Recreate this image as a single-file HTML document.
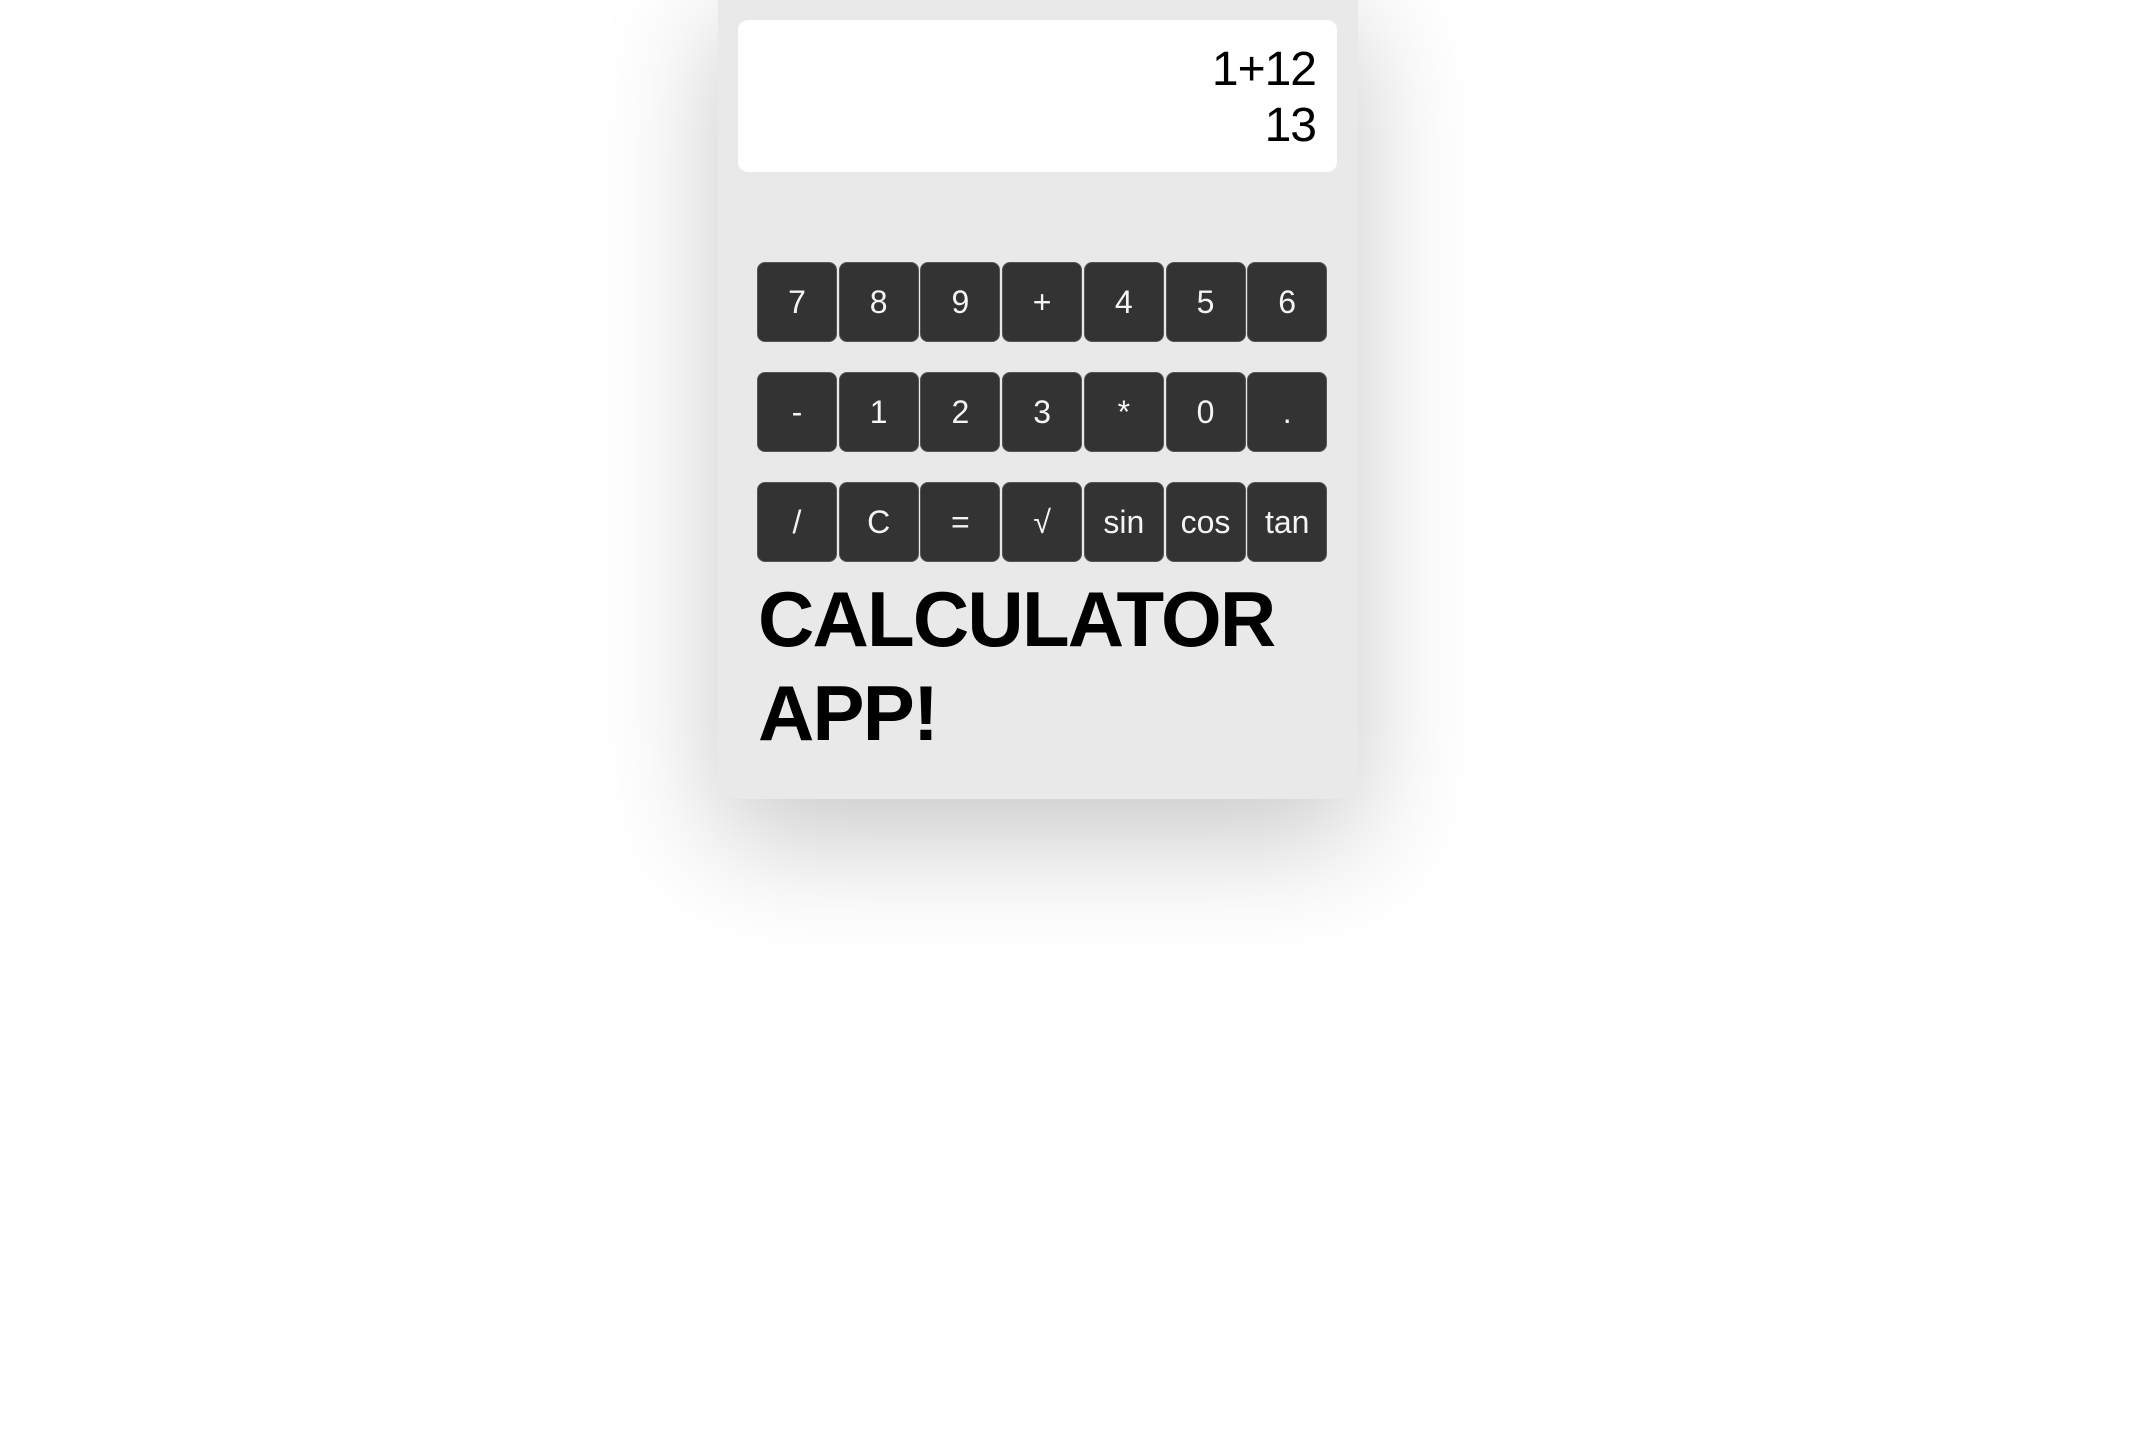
<!DOCTYPE html>
<html><head><style>
html,body{margin:0;padding:0;background:#fff;width:2132px;height:1452px;overflow:hidden;font-family:"Liberation Sans",Arial,sans-serif}
.card{position:absolute;left:718px;top:-20px;width:640px;height:819px;background:#e9e9e9;border-radius:22px;box-shadow:0 40px 120px rgba(0,0,0,0.22)}
.disp{position:absolute;left:738px;top:20px;width:599px;height:152px;background:#fff;border-radius:10px}
.disp div{position:absolute;right:21px;font-size:48px;line-height:56px;color:#000;letter-spacing:-1px}
.btn{position:absolute;width:78px;height:78px;background:#333;border:1px solid #555;border-radius:8px;color:#f4f4f4;font-size:32px;display:flex;align-items:center;justify-content:center;box-sizing:content-box}
.title{position:absolute;left:758px;top:572px;font-weight:bold;font-size:78px;line-height:94px;letter-spacing:-1.8px;color:#000}
</style></head><body>
<div class="card"></div>
<div class="disp"><div style="top:22px">1+12</div><div style="top:78px">13</div></div>
<div id="k"></div>
<div class="title">CALCULATOR<br>APP!</div>
<script>
var rows=[["7","8","9","+","4","5","6"],["-","1","2","3","*","0","."],["/","C","=","√","sin","cos","tan"]];
var h="";
for(var r=0;r<3;r++)for(var c=0;c<7;c++){h+='<div class="btn" style="left:'+(757+c*81.7)+'px;top:'+(262+r*110)+'px">'+rows[r][c]+'</div>';}
document.getElementById("k").innerHTML=h;
</script>
</body></html>
